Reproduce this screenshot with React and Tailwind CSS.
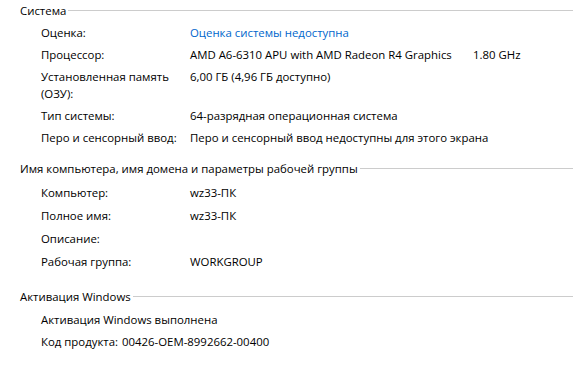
import React from 'react';

const SectionHeader = ({ title, className = '' }) => (
  <div className={`flex items-center pl-[20px] ${className}`}>
    <span className="leading-[17px]">{title}</span>
    <div className="flex-1 ml-[2px] h-px bg-[#cccccc]" />
  </div>
);

const Row = ({ label, children }) => (
  <div className="grid grid-cols-[149px_1fr] pl-[41px] leading-[17px]">
    <div>{label}</div>
    <div>{children}</div>
  </div>
);

export default function App() {
  return (
    <div
      className="w-[573px] h-[379px] bg-white text-black text-[11.4px] pt-[2px]"
      style={{ fontFamily: '"Segoe UI", "Open Sans", "Noto Sans", sans-serif' }}
    >
      <SectionHeader title="Система" />
      <div className="mt-[5px] flex flex-col gap-[5px]">
        <Row label="Оценка:">
          <span className="text-[#0066cc]">Оценка системы недоступна</span>
        </Row>
        <Row label="Процессор:">
          <div className="flex">
            <span className="w-[283px]">AMD A6-6310 APU with AMD Radeon R4 Graphics</span>
            <span>1.80 GHz</span>
          </div>
        </Row>
        <Row label={<>Установленная память<br />(ОЗУ):</>}>6,00 ГБ (4,96 ГБ доступно)</Row>
        <Row label="Тип системы:">64-разрядная операционная система</Row>
        <Row label="Перо и сенсорный ввод:">Перо и сенсорный ввод недоступны для этого экрана</Row>
      </div>

      <SectionHeader title="Имя компьютера, имя домена и параметры рабочей группы" className="mt-[14px]" />
      <div className="mt-[7px] flex flex-col gap-[6px]">
        <Row label="Компьютер:">wz33-ПК</Row>
        <Row label="Полное имя:">wz33-ПК</Row>
        <Row label="Описание:">{'\u00a0'}</Row>
        <Row label="Рабочая группа:">WORKGROUP</Row>
      </div>

      <SectionHeader title="Активация Windows" className="mt-[18px]" />
      <div className="mt-[6px] flex flex-col gap-[5px] pl-[41px] leading-[17px]">
        <div>Активация Windows выполнена</div>
        <div className="flex">
          <span>Код продукта:</span>
          <span className="ml-[4px]">00426-OEM-8992662-00400</span>
        </div>
      </div>
    </div>
  );
}
